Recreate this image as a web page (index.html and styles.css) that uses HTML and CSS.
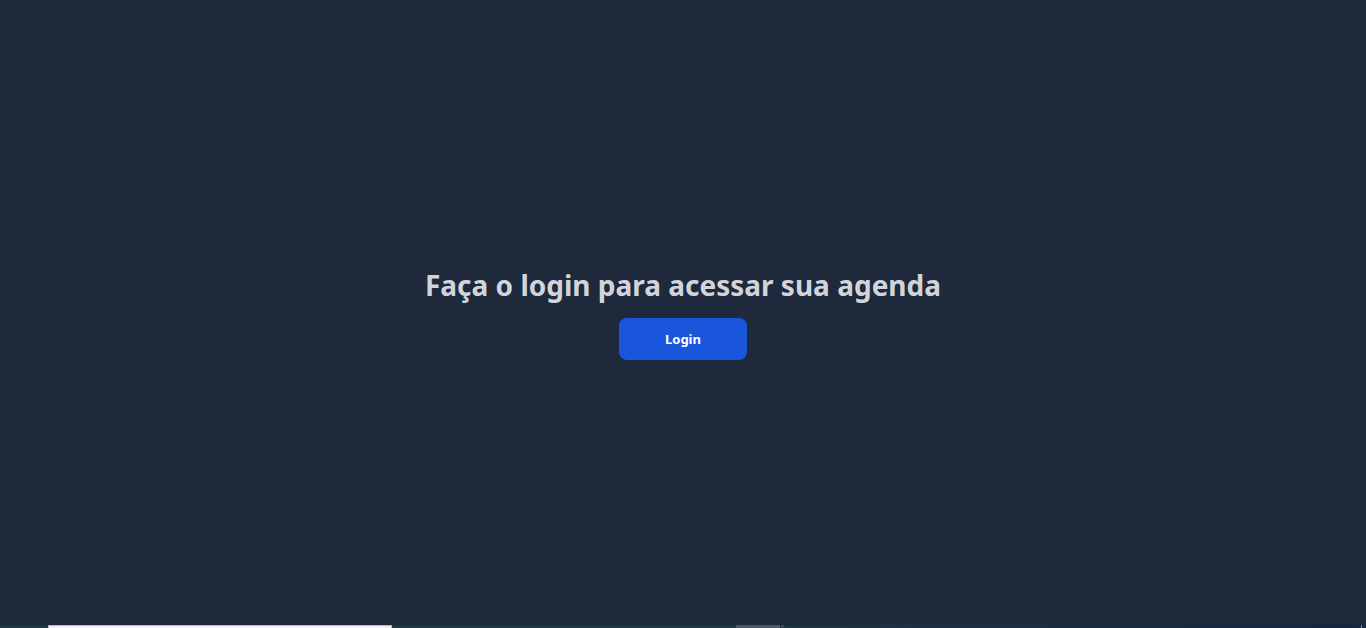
FILE: index.html
```html
<!DOCTYPE html>
<html lang="pt-BR">
<head>
<meta charset="utf-8">
<meta name="viewport" content="width=device-width, initial-scale=1">
<title>Agenda</title>
<link rel="stylesheet" href="styles.css">
</head>
<body class="page">
<main class="login">
<h1 class="login-title">Faça o login para acessar sua agenda</h1>
<button class="login-button" type="button">Login</button>
</main>
<div class="taskbar" aria-hidden="true">
<span class="taskbar-start"></span>
<span class="taskbar-search"></span>
<span class="taskbar-apps"></span>
<span class="taskbar-active"></span>
<span class="taskbar-stack"></span>
<span class="taskbar-tray"></span>
</div>
</body>
</html>
```
FILE: styles.css
```css
* {
  box-sizing: border-box;
}

.page {
  display: flex;
  flex-direction: column;
  min-height: 100vh;
  margin: 0;
  background: #1e293b;
  color: #d1d5db;
  font-family: "Segoe UI", "Noto Sans", "Open Sans", sans-serif;
}

.login {
  display: flex;
  flex: 1;
  flex-direction: column;
  align-items: center;
  justify-content: center;
  gap: 15px;
  padding-top: 2px;
}

.login-title {
  margin: 0;
  font-size: 28px;
  font-weight: 700;
  line-height: 36px;
  text-align: center;
}

.login-button {
  width: 128px;
  padding: 11px 20px;
  border: 0;
  border-radius: 8px;
  background: #1a56db;
  color: #fff;
  font-family: inherit;
  font-size: 13px;
  font-weight: 700;
  line-height: 20px;
  cursor: pointer;
}

.taskbar {
  display: flex;
  height: 3px;
  background: #1f3540;
}

.taskbar-start {
  width: 48px;
}

.taskbar-search {
  width: 344px;
  border: 1px solid #b4b6b9;
  border-bottom: 0;
  background: #f3f3f3;
}

.taskbar-apps {
  width: 344px;
}

.taskbar-active {
  width: 44px;
  background: #4b5a66;
}

.taskbar-stack {
  width: 4px;
  border-left: 1px solid #1f3540;
  background: #3b4955;
}

.taskbar-tray {
  flex: 1;
  margin-right: 4px;
  border-right: 1px solid #8a94a3;
  background: linear-gradient(90deg, #1f3442, #17243f);
  box-shadow: 4px 0 #17243f;
}
```
